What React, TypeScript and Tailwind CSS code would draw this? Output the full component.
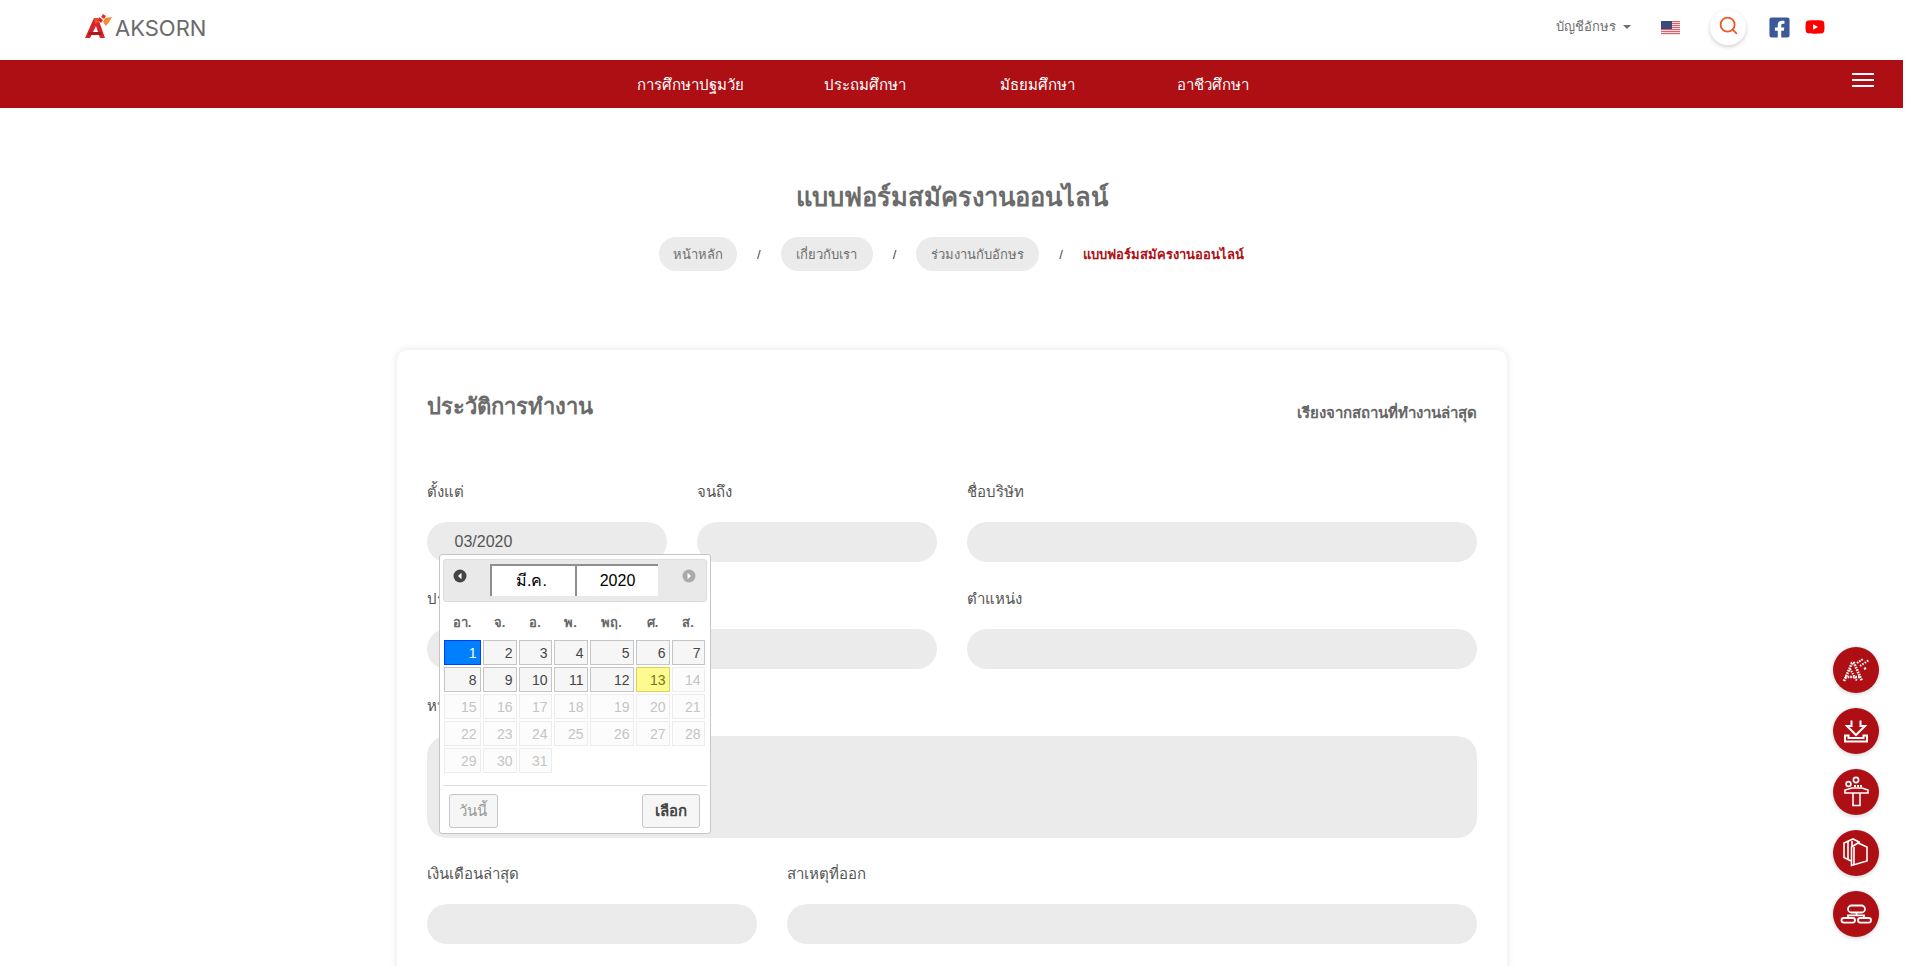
import React from 'react';
import { Search } from 'lucide-react';
import { FaFacebookSquare, FaYoutube } from 'react-icons/fa';

const fontStack = "font-['Liberation_Sans','Noto_Sans',sans-serif]";
const dayGrid = 'grid grid-cols-[37px_34px_33px_34px_44px_34px_33px] gap-x-[2px]';

const navItems = [
    { label: 'การศึกษาปฐมวัย', cls: 'w-[187px]' },
    { label: 'ประถมศึกษา', cls: 'w-[176px]' },
    { label: 'มัธยมศึกษา', cls: 'w-[177px]' },
    { label: 'อาชีวศึกษา', cls: 'w-[71px]' },
];

const weekDays = ['อา.', 'จ.', 'อ.', 'พ.', 'พฤ.', 'ศ.', 'ส.'];

function Logo() {
    return (
        <div className="flex items-end">
            <svg width="28" height="26" viewBox="0 0 28 26" className="mb-[2px] mr-[2px]">
                <path d="M0 25 L9 5 L13 5 L20 25 L15 25 L11 13 L5 25 Z" fill="#d8232a" />
                <path d="M4 19 L16 19 L17 22 L3 22 Z" fill="#a81c1c" />
                <path d="M9 5 L13 5 L14 9 L10 11 Z" fill="#ee4b2b" />
                <path d="M14 4 L18 7 L16 10 L13 7 Z" fill="#d8232a" />
                <path d="M18 1 L21 3 L19 6 L16 4 Z" fill="#e0362c" />
                <path d="M20 5 L27 4 L24 9 L21 13 L18 9 Z" fill="#f58a2c" />
            </svg>
            <span className="mb-[2px] text-[22px] leading-[22px] text-[#6b6b6b] font-['Inter',sans-serif]">AKSORN</span>
        </div>
    );
}

function UsFlag() {
    return (
        <svg width="19" height="14" viewBox="0 0 19 14" className="mt-[2px] block">
            <rect width="19" height="14" fill="#fff" />
            {[0, 2, 4, 6, 8, 10, 12].map(y => (
                <rect key={y} y={y} width="19" height="1.2" fill="#d8616a" />
            ))}
            <rect width="11" height="8" fill="#3c4a78" />
        </svg>
    );
}

function Field({ label, className, tall }: { label: string; className: string; tall?: boolean }) {
    return (
        <div className={className}>
            <p className="text-[15px] leading-[22px] text-[#555]">{label}</p>
            <div className={`mt-[19px] bg-[#ebebeb] ${tall ? 'h-[102px] rounded-[20px]' : 'h-[40px] rounded-full'}`} />
        </div>
    );
}

function DayCell({ day }: { day: number }) {
    let cls = 'border-[#c5c5c5] bg-[#f6f6f6] text-[#454545]';
    if (day === 1) cls = 'border-[#003eff] bg-[#007fff] text-white';
    if (day === 13) cls = 'border-[#dad55e] bg-[#fffa90] text-[#777620]';
    if (day > 13) cls = 'border-[#ececec] bg-[#fcfcfc] text-[#c4c4c4]';
    return <div className={`h-[25px] border pr-[3px] text-right text-[14px] leading-[24px] ${cls}`}>{day}</div>;
}

function CircleArrow({ dir, color }: { dir: 'left' | 'right'; color: string }) {
    return (
        <svg width="14" height="14" viewBox="0 0 14 14" className="block">
            <circle cx="7" cy="7" r="6.5" fill={color} />
            <path d={dir === 'left' ? 'M8.5 3.8 L5 7 L8.5 10.2 Z' : 'M5.5 3.8 L9 7 L5.5 10.2 Z'} fill="#fff" />
        </svg>
    );
}

function DatePicker() {
    const days = Array.from({ length: 31 }, (_, i) => i + 1);
    return (
        <div className={`absolute left-[12px] top-[73px] z-10 h-[280px] w-[272px] rounded-[3px] border border-[#c5c5c5] bg-white px-[3px] pt-[4px] ${fontStack}`}>
            <div className="flex h-[43px] items-start rounded-[3px] border border-[#ddd] bg-[#e9e9e9]">
                <div className="mt-[4px] flex h-[24px] w-[46px] items-center pl-[9px]">
                    <CircleArrow dir="left" color="#444" />
                </div>
                <div className="mt-[4px] flex h-[32px] w-[85px] items-center justify-center border-l-2 border-t-2 border-[#8f8f8f] bg-white pr-[3px] text-[16px] text-black">
                    มี.ค.
                </div>
                <div className="mt-[4px] flex h-[32px] w-[83px] items-center justify-center border-l-2 border-t-2 border-[#8f8f8f] bg-white pl-[1px] text-[16px] text-black">
                    2020
                </div>
                <div className="mt-[4px] flex h-[24px] items-center pl-[24px]">
                    <CircleArrow dir="right" color="#aaa" />
                </div>
            </div>
            <div className={`${dayGrid} ml-px mt-[9px]`}>
                {weekDays.map(d => (
                    <div key={d} className="text-center text-[13px] font-bold leading-[24px] text-[#666]">
                        {d}
                    </div>
                ))}
            </div>
            <div className={`${dayGrid} ml-px mt-[5px] gap-y-[2px]`}>
                {days.map(day => (
                    <DayCell key={day} day={day} />
                ))}
            </div>
            <div className="mt-[12px] flex justify-between border-t border-[#ddd] pl-[6px] pr-[7px] pt-[8px]">
                <button className="h-[34px] w-[49px] rounded-[3px] border border-[#c5c5c5] bg-[#f6f6f6] text-[15px] text-[#999]">
                    วันนี้
                </button>
                <button className="h-[34px] w-[58px] rounded-[3px] border border-[#c5c5c5] bg-[#f6f6f6] text-[15px] font-bold text-[#454545]">
                    เลือก
                </button>
            </div>
        </div>
    );
}

function Crumb({ label, cls }: { label: string; cls: string }) {
    return (
        <span className={`flex h-[34px] items-center justify-center rounded-full bg-[#ebebeb] pt-[1px] text-[13px] text-[#6f6f6f] ${cls}`}>
            {label}
        </span>
    );
}

function Slash() {
    return <span className="pt-[1px] text-[13px] text-[#444]">/</span>;
}

const sideIcons = [
    <svg key="a" width="46" height="46" viewBox="0 0 46 46" fill="none" stroke="#fff">
        <path d="M11 34 L19 16 L21 16 L29 34" strokeWidth="2.6" strokeDasharray="1.6 1" />
        <path d="M17 22 L24 34" strokeWidth="2" strokeDasharray="1.4 1" />
        <path d="M12 30 L28 30" strokeWidth="2.6" strokeDasharray="1.6 1" />
        <path d="M24 16 L30 12" strokeWidth="2" strokeDasharray="1.6 1" />
        <path d="M27 19 L36 13" strokeWidth="2" strokeDasharray="1.6 1.2" />
        <path d="M31 22 L33 21" strokeWidth="2" />
    </svg>,
    <svg key="b" width="46" height="46" viewBox="0 0 46 46" fill="none" stroke="#fff" strokeWidth="2">
        <path d="M18.5 12.5 L18.5 18 L14 18 L23 27 L32 18 L27.5 18 L27.5 12.5" />
        <path d="M12 27.5 L12 33.5 L34 33.5 L34 27.5 L30.5 27.5 L30.5 30 L15.5 30 L15.5 27.5 Z" />
    </svg>,
    <svg key="c" width="46" height="46" viewBox="0 0 46 46" fill="none" stroke="#fff" strokeWidth="1.6">
        <circle cx="23" cy="11" r="2.6" />
        <circle cx="15.5" cy="15" r="2.4" />
        <path d="M12 24 L12 21 L19 19 L29 19 L35 21 L35 24 Z" />
        <path d="M21 17 L29 17" strokeWidth="2" strokeDasharray="2 1" />
        <path d="M20 24 L20 36.5 L27 36.5 L27 24" />
    </svg>,
    <svg key="d" width="46" height="46" viewBox="0 0 46 46" fill="none" stroke="#fff" strokeWidth="1.6">
        <path d="M18 31 L11 27.5 L11 13 L20 9 L27 12.5" />
        <path d="M15 11 L15 29.5" />
        <path d="M19 11 L19 17" />
        <path d="M18.5 19 L18.5 35.5 L34 31 L34 17 L25 13 L18.5 17 Z" />
        <path d="M21 17 L21 34.5" />
    </svg>,
    <svg key="e" width="46" height="46" viewBox="0 0 46 46" fill="none" stroke="#fff" strokeWidth="1.8">
        <rect x="15" y="14.5" width="17" height="7" rx="3.5" />
        <rect x="8.5" y="27" width="13.5" height="4.6" rx="2.3" />
        <rect x="25" y="27" width="13" height="4.6" rx="2.3" />
        <path d="M23.5 21.5 L23.5 24.3 M15 27 L15 24.3 L31 24.3 L31 27" />
    </svg>,
];

export default function App() {
    return (
        <div className={`relative h-[966px] w-[1920px] overflow-hidden bg-white ${fontStack}`}>
            <div className="w-[1903px]">
                <header className="flex h-[60px] items-center pb-[6px] pl-[85px] pr-[78px]">
                    <Logo />
                    <div className="ml-auto flex items-center">
                        <span className="text-[13px] text-[#6f6f6f]">บัญชีอักษร</span>
                        <span className="ml-[7px] h-0 w-0 border-x-[4px] border-t-[4px] border-x-transparent border-t-[#6f6f6f]" />
                        <div className="ml-[30px]">
                            <UsFlag />
                        </div>
                        <div className="ml-[30px] flex h-[35px] w-[36px] items-center justify-center rounded-full bg-white pb-[3px] shadow-[0_2px_4px_rgba(0,0,0,0.18)]">
                            <Search size={21} strokeWidth={2.1} className="text-[#ee5a2c]" />
                        </div>
                        <FaFacebookSquare size={23} className="ml-[22px] text-[#3b5998]" />
                        <FaYoutube size={20} className="ml-[14px] text-[#ff0000]" />
                    </div>
                </header>

                <nav className="relative flex h-[48px] items-center bg-[#ad0f14] pl-[637px] pt-[2px] text-[15px] font-medium text-white">
                    {navItems.map(item => (
                        <span key={item.label} className={`${item.cls} whitespace-nowrap`}>
                            {item.label}
                        </span>
                    ))}
                    <div className="absolute right-[29px] top-[13px] flex w-[22px] flex-col gap-[4px]">
                        <span className="h-[2px] bg-white" />
                        <span className="h-[2px] bg-white" />
                        <span className="h-[2px] bg-white" />
                    </div>
                </nav>

                <h1 className="mt-[69px] text-center text-[25.5px] font-bold leading-[40px] text-[#6b6b6b]">
                    แบบฟอร์มสมัครงานออนไลน์
                </h1>

                <div className="mt-[20px] flex items-center justify-center gap-[20px]">
                    <Crumb label="หน้าหลัก" cls="w-[78px]" />
                    <Slash />
                    <Crumb label="เกี่ยวกับเรา" cls="w-[92px]" />
                    <Slash />
                    <Crumb label="ร่วมงานกับอักษร" cls="w-[123px]" />
                    <Slash />
                    <span className="pt-[1px] text-[13px] font-bold text-[#ad0f14]">แบบฟอร์มสมัครงานออนไลน์</span>
                </div>

                <main className="mx-auto mt-[79px] w-[1110px] rounded-[10px] bg-white pb-[200px] pl-[30px] pr-[30px] pt-[40px] shadow-[0_0_8px_rgba(0,0,0,0.1)]">
                    <div className="flex items-start justify-between">
                        <h2 className="text-[22px] font-bold leading-[34px] text-[#6b6b6b]">ประวัติการทำงาน</h2>
                        <p className="mt-[11px] text-[15px] font-semibold leading-[24px] text-[#666]">
                            เรียงจากสถานที่ทำงานล่าสุด
                        </p>
                    </div>

                    <div className="mt-[56px] grid grid-cols-[240px_240px_510px] gap-x-[30px] gap-y-[26px]">
                        <div className="relative">
                            <p className="text-[15px] leading-[22px] text-[#555]">ตั้งแต่</p>
                            <div className="mt-[19px] flex h-[40px] items-center rounded-full bg-[#ebebeb] pl-[28px] text-[16px] text-[#555]">
                                03/2020
                            </div>
                            <DatePicker />
                        </div>
                        <Field label="จนถึง" className="" />
                        <Field label="ชื่อบริษัท" className="" />
                        <Field label="ประเภทธุรกิจ" className="col-span-2" />
                        <Field label="ตำแหน่ง" className="" />
                        <Field label="หน้าที่ความรับผิดชอบ" className="col-span-3" tall />
                    </div>

                    <div className="mt-[25px] grid grid-cols-[330px_690px] gap-x-[30px]">
                        <Field label="เงินเดือนล่าสุด" className="" />
                        <Field label="สาเหตุที่ออก" className="" />
                    </div>
                </main>
            </div>

            <div className="absolute left-[1833px] top-[647px] flex flex-col gap-[15px]">
                {sideIcons.map((icon, i) => (
                    <div
                        key={i}
                        className="flex h-[46px] w-[46px] items-center justify-center rounded-full bg-[#ad0f14] shadow-[0_1px_4px_rgba(0,0,0,0.2)]"
                    >
                        {icon}
                    </div>
                ))}
            </div>
        </div>
    );
}
